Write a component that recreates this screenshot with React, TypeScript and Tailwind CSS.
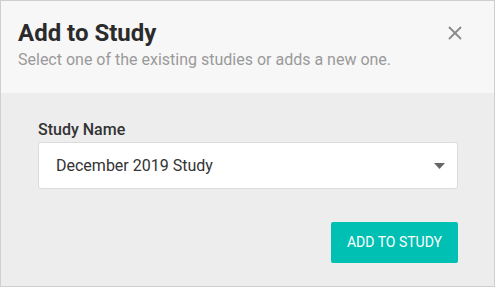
import { X } from "lucide-react";

export default function App() {
  return (
    <div
      className="w-[495px] h-[287px] flex flex-col border border-[#cfcfcf] bg-[#ededed] overflow-hidden"
      style={{ fontFamily: "Roboto, 'Liberation Sans', sans-serif" }}
    >
      {/* header */}
      <div className="h-[92px] bg-[#f7f7f7] flex items-start justify-between pl-[17px] pr-[28px] pt-[18px]">
        <div className="flex flex-col">
          <h1 className="text-[24px] leading-[28px] font-bold text-[#2b2b2b]">Add to Study</h1>
          <p className="text-[16px] leading-[20px] text-[#9a9a9a] mt-[3px]">
            Select one of the existing studies or adds a new one.
          </p>
        </div>
        <button className="mt-[3px] text-[#8a8a8a]">
          <X size={22} strokeWidth={2} />
        </button>
      </div>

      {/* body */}
      <div className="flex-1 flex flex-col pl-[37px] pr-[36px] pt-[27px]">
        <label className="text-[16px] leading-[20px] font-medium text-[#333]">Study Name</label>
        <div className="mt-[2px] h-[47px] bg-white border border-[#dcdcdc] rounded-[3px] flex items-center justify-between pl-[17px] pr-[12px]">
          <span className="text-[16px] text-[#333]">December 2019 Study</span>
          <svg width="11" height="6" viewBox="0 0 11 6">
            <path d="M0 0h11L5.5 6z" fill="#666" />
          </svg>
        </div>
        <div className="flex justify-end mt-[33px]">
          <button className="h-[41px] w-[127px] bg-[#00bfb3] text-white text-[14px] rounded-[2px] uppercase">
            Add to Study
          </button>
        </div>
      </div>
    </div>
  );
}
